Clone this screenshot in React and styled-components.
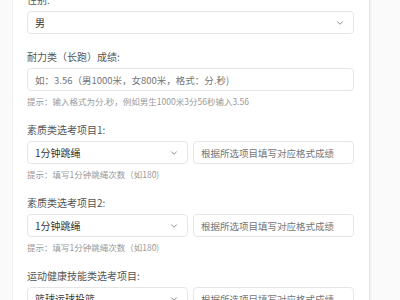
import * as React from 'react';
import styled, { createGlobalStyle } from 'styled-components';
import { ChevronDown } from 'lucide-react';

const GlobalStyle = createGlobalStyle`
  html, body {
    margin: 0;
    padding: 0;
    background: #fafafa;
    overflow: hidden;
  }
  body {
    font-family: "Noto Sans CJK SC", "Noto Sans", sans-serif;
  }
`;

const Page = styled.div`
  width: 400px;
  height: 300px;
  overflow: hidden;
  padding-left: 12px;
  box-sizing: border-box;
`;

const Card = styled.div`
  width: 358px;
  box-sizing: border-box;
  margin-top: -8px;
  padding: 0 15px 20px 14px;
  background: #fff;
  border-left: 1px solid #efefef;
  border-right: 1px solid #e4e4e4;
  box-shadow: 1px 0 2px rgba(0, 0, 0, 0.05);
`;

const FieldGroup = styled.div`
  display: flex;
  flex-direction: column;
  margin-bottom: 15px;
`;

const Label = styled.label`
  font-size: 10px;
  line-height: 16px;
  color: #555;
  margin-bottom: 3px;
`;

const Row = styled.div`
  display: grid;
  grid-template-columns: 1fr 1fr;
  gap: 5px;
`;

const SelectWrap = styled.div`
  position: relative;
`;

const SelectField = styled.select`
  display: block;
  appearance: none;
  width: 100%;
  height: 23px;
  box-sizing: border-box;
  border: 1px solid #e6e6e6;
  border-radius: 4px;
  background: #fff;
  padding: 0 20px 0 7px;
  font-family: inherit;
  font-size: 10px;
  color: #333;
  outline: none;
`;

const Chevron = styled(ChevronDown)`
  position: absolute;
  right: 9px;
  top: 7px;
  color: #777;
  pointer-events: none;
`;

const InputField = styled.input`
  display: block;
  width: 100%;
  height: 23px;
  box-sizing: border-box;
  border: 1px solid #e6e6e6;
  border-radius: 4px;
  background: #fff;
  padding: 0 7px;
  font-family: inherit;
  font-size: 9.5px;
  color: #333;
  outline: none;
  ::placeholder {
    color: #8a8a8a;
  }
`;

const Hint = styled.span`
  margin-top: 4px;
  font-size: 8.5px;
  line-height: 12px;
  color: #999;
`;

function Select({ value }) {
  return (
    <SelectWrap>
      <SelectField defaultValue={value}>
        <option value={value}>{value}</option>
      </SelectField>
      <Chevron size={10} strokeWidth={2} />
    </SelectWrap>
  );
}

const RESULT_PLACEHOLDER = '根据所选项目填写对应格式成绩';

export default function App() {
  return (
    <Page>
      <GlobalStyle />
      <Card>
        <FieldGroup>
          <Label>性别:</Label>
          <Select value="男" />
        </FieldGroup>

        <FieldGroup>
          <Label>耐力类（长跑）成绩:</Label>
          <InputField placeholder="如：3.56（男1000米，女800米，格式：分.秒)" />
          <Hint>提示：输入格式为分.秒，例如男生1000米3分56秒输入3.56</Hint>
        </FieldGroup>

        <FieldGroup>
          <Label>素质类选考项目1:</Label>
          <Row>
            <Select value="1分钟跳绳" />
            <InputField placeholder={RESULT_PLACEHOLDER} />
          </Row>
          <Hint>提示：填写1分钟跳绳次数（如180)</Hint>
        </FieldGroup>

        <FieldGroup>
          <Label>素质类选考项目2:</Label>
          <Row>
            <Select value="1分钟跳绳" />
            <InputField placeholder={RESULT_PLACEHOLDER} />
          </Row>
          <Hint>提示：填写1分钟跳绳次数（如180)</Hint>
        </FieldGroup>

        <FieldGroup>
          <Label>运动健康技能类选考项目:</Label>
          <Row>
            <Select value="篮球运球投篮" />
            <InputField placeholder={RESULT_PLACEHOLDER} />
          </Row>
        </FieldGroup>
      </Card>
    </Page>
  );
}
